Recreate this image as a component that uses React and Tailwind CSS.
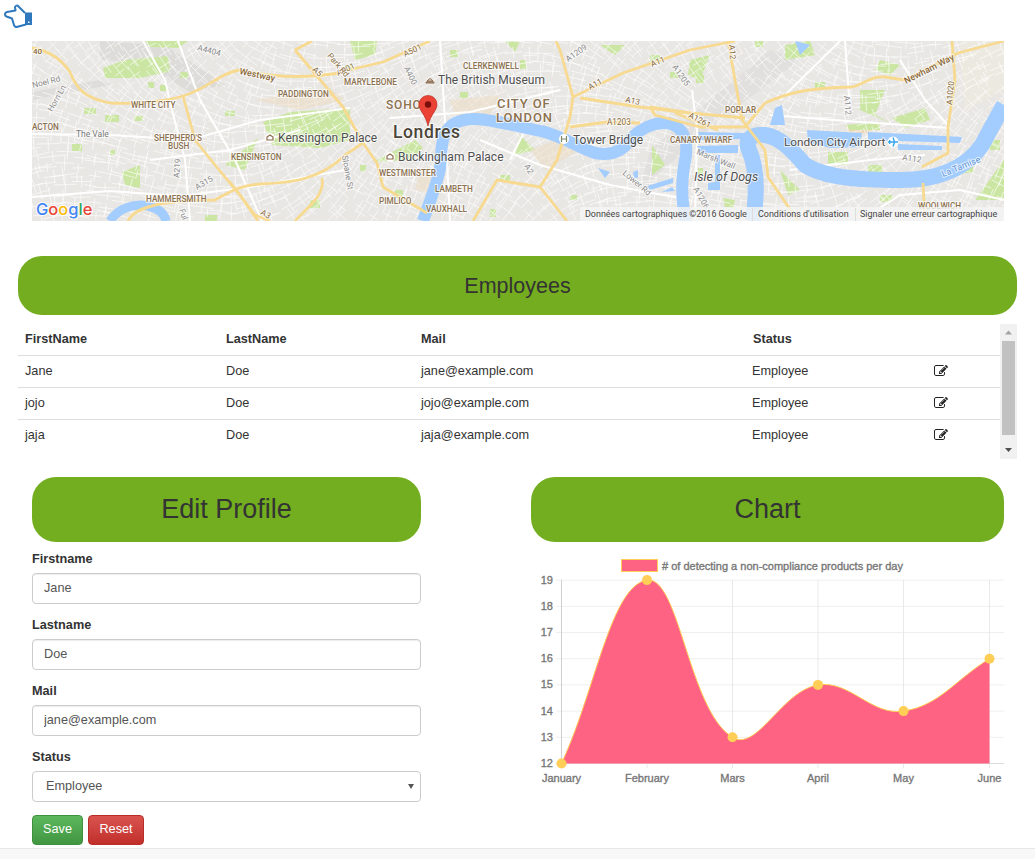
import React from "react";

const FONT = "'Liberation Sans', Arial, sans-serif";

function rng(seed) {
  let s = seed;
  return () => {
    s = (s * 16807) % 2147483647;
    return s / 2147483647;
  };
}

function buildStreets() {
  const r = rng(4242);
  const out = [];
  for (let y = 41; y < 221; y += 10) {
    for (let x = 32; x < 1004; x += 14) {
      const a = Math.sin(x / 90) * 0.7 + Math.cos(y / 60) * 0.5 + (r() - 0.5) * 0.2;
      const len = 6 + r() * 8;
      const cx = x + r() * 9;
      const cy = y + r() * 7;
      const dx = Math.cos(a) * len;
      const dy = Math.sin(a) * len;
      out.push(`M${(cx - dx).toFixed(1)} ${(cy - dy).toFixed(1)}L${(cx + dx).toFixed(1)} ${(cy + dy).toFixed(1)}`);
      const l2 = 4 + r() * 5;
      const ex = -Math.sin(a) * l2;
      const ey = Math.cos(a) * l2;
      out.push(`M${(cx - ex).toFixed(1)} ${(cy - ey).toFixed(1)}L${(cx + ex).toFixed(1)} ${(cy + ey).toFixed(1)}`);
    }
  }
  return out.join("");
}
const STREETS = buildStreets();

const WHITE_ROADS = [
  "M143 41L165 80L172 110L185 160L190 221",
  "M32 197L110 191L180 196L250 187L345 170",
  "M32 134L110 135L190 140L260 120L350 108",
  "M178 41L200 100L235 160L262 221",
  "M150 160L230 150L300 130",
  "M440 41L445 120L450 221",
  "M390 118L470 112L560 90",
  "M480 140L540 165L610 185L690 200",
  "M510 160L530 120",
  "M780 100L840 41",
  "M770 115L860 122L950 128",
  "M845 41L850 110",
  "M900 60L925 100L948 125",
  "M790 170L870 160L925 155",
  "M860 221L900 195L960 190L1004 200",
  "M692 90L697 130L695 221",
];

const YELLOW_ROADS = [
  "M32 48C50 51 62 60 70 72C76 88 84 98 110 103C140 105 170 100 183 96C205 90 222 72 240 70C265 76 300 80 345 72",
  "M183 96L195 140L215 165L240 195L258 221",
  "M128 221C135 206 165 200 215 200C230 192 238 186 260 184C290 183 320 180 345 155",
  "M230 182L255 215L270 221",
  "M295 221C310 205 325 195 322 178",
  "M340 72L383 62L430 41",
  "M295 50L343 107L363 143L377 163L383 187L427 213",
  "M295 50L312 41",
  "M345 155L363 143",
  "M473 221L497 180L540 187L567 221",
  "M540 187L557 160L570 117L573 97L560 50L556 41",
  "M573 97L623 73L690 50",
  "M580 98L640 107L690 113",
  "M570 127L607 122L640 123",
  "M728 41L735 80L742 120L765 150L768 177L798 221",
  "M765 103C790 92 808 88 852 87C865 84 870 76 885 77L905 80L958 53L1004 41",
  "M952 41L955 80L948 127L948 153L922 167",
  "M650 107L655 115L700 127L745 127L765 103",
  "M675 113L718 130",
  "M923 183L925 221",
  "M690 50L735 41",
  "M650 107L690 113L745 118",
];

const PARKS = [
  "M103 68L125 60L158 57L168 72L140 78L105 78Z",
  "M145 41L188 41L178 48L150 47Z",
  "M158 57L168 56L170 72L163 66Z",
  "M263 122L290 112L350 108L350 140L320 148L272 145Z",
  "M373 162L415 140L423 148L410 160Z",
  "M350 41L377 41L375 55L355 60Z",
  "M122 172L140 165L140 188L125 185Z",
  "M258 138L245 170L225 165Z",
  "M785 45L810 41L815 55L785 60Z",
  "M880 60L900 65L890 75L875 70Z",
  "M860 90L885 90L875 115L895 125L860 110Z",
  "M892 118L925 108L930 120L905 128Z",
  "M845 125L880 122L880 130L850 130Z",
  "M690 60L710 55L700 80L688 75Z",
  "M828 152L848 152L848 165L828 165Z",
  "M780 170L790 180L800 190L788 195Z",
  "M600 45L625 45L615 55Z",
  "M505 41L520 41L515 52Z",
  "M520 135L535 150L515 155Z",
  "M652 145L665 165L652 175Z",
  "M975 200L1004 160L1004 200Z",
  "M723 198L735 200L733 208L725 207Z",
];

const GREEN_DOTS = [
  [84, 108, 12, 6], [105, 115, 14, 7], [134, 116, 9, 5], [72, 144, 10, 7], [110, 150, 5, 5],
  [180, 72, 8, 6], [225, 111, 10, 5], [345, 65, 8, 6], [450, 50, 8, 7], [460, 92, 8, 6], [520, 60, 6, 9],
  [570, 195, 7, 5], [650, 55, 10, 8], [670, 72, 9, 6], [815, 82, 10, 7], [500, 175, 10, 7], [395, 190, 8, 8],
  [360, 165, 6, 6], [310, 200, 10, 8], [490, 209, 6, 8], [205, 215, 12, 6], [755, 40, 8, 7],
  [868, 165, 14, 10], [822, 170, 7, 10], [880, 195, 12, 7], [990, 140, 10, 10], [965, 165, 8, 8], [696, 75, 8, 8],
  [698, 168, 5, 8], [148, 82, 6, 6], [160, 85, 7, 6],
];

const DOCKS = [
  "M807 130L862 133L860 147L830 148L808 142Z",
  "M868 132L962 137L960 143L868 140Z",
  "M898 144L942 146L942 150L898 150Z",
  "M698 132L745 133L742 139L700 140Z",
  "M697 146L738 145L738 153L700 153Z",
  "M715 155L720 155L720 190L708 190L708 183L715 182Z",
  "M647 186L673 178L673 183L650 190Z",
  "M672 187L675 191L662 192Z",
  "M633 172L638 170L638 178L634 178Z",
  "M775 108L782 105L785 125L770 125Z",
  "M598 168L610 172L605 178Z",
  "M795 41L800 55L810 45Z",
];

function L({ x, y, s = 8.2, c = "#8c7150", r, w = 400, i, ls, ff = "Roboto", children, a = "start" }) {
  return (
    <text
      x={x}
      y={y}
      fontSize={s}
      fill={c}
      fontWeight={w}
      fontStyle={i ? "italic" : "normal"}
      letterSpacing={ls}
      fontFamily={`${ff}, 'Liberation Sans', sans-serif`}
      textAnchor={a}
      transform={r ? `rotate(${r} ${x} ${y})` : undefined}
      stroke="#ffffff"
      strokeOpacity="0.7"
      strokeWidth="2"
      paintOrder="stroke"
    >
      {children}
    </text>
  );
}

function MapDrawing() {
  return (
    <svg width="972" height="180" viewBox="32 41 972 180" className="block">
      <g style={{ filter: "blur(0.5px)" }}>
        <rect x="32" y="41" width="972" height="180" fill="#e9e7e4" />
        <path d="M100 41L165 45L225 85L190 92L140 62L100 60Z" fill="#dddcd9" />
        <path d="M32 92L100 80L110 85L32 100Z" fill="#dfdddb" />
        <path d="M640 190L720 120L800 60L770 50L650 150Z" fill="#e2e0de" />
        <path d="M960 41L1004 41L1004 90L965 110Z" fill="#ece9e0" />
        <path d="M845 125L880 124L870 133L850 134Z" fill="#ead9bd" />
        {PARKS.map((d, i) => (
          <path key={i} d={d} fill="#cbe6a3" />
        ))}
        {GREEN_DOTS.map(([x, y, w, h], i) => (
          <rect key={i} x={x} y={y} width={w} height={h} fill="#cbe6a3" />
        ))}
        <path d={STREETS} stroke="#ffffff" strokeWidth="0.9" fill="none" strokeOpacity="0.7" />
        <path d="M255 100L330 88L345 100L300 110Z M450 100L500 95L490 115L455 115Z M530 150L570 135L580 150L545 170Z M420 170L445 175L440 195L415 190Z" fill="#ecdcc4" opacity="0.55" />
        {WHITE_ROADS.map((d, i) => (
          <path key={i} d={d} stroke="#ffffff" strokeWidth="2" fill="none" />
        ))}
        <path
          d="M110 221C118 208 135 203 148 206C160 209 165 215 166 221"
          stroke="#a3ccff"
          strokeWidth="9"
          fill="none"
        />
        <path
          d="M423 221C430 200 437 185 440 168C442 150 440 135 452 125C462 118 478 118 492 121C510 124 525 128 545 132C565 138 580 148 595 153C610 156 622 152 630 140C640 128 655 122 667 123C680 125 688 135 686 155C682 175 680 195 686 221"
          stroke="#a3ccff"
          strokeWidth="12"
          fill="none"
        />
        <path
          d="M753 221C757 195 758 170 749 150C745 140 750 134 765 135C780 137 792 150 805 165C825 178 860 180 900 180C935 180 965 170 982 145C990 130 998 115 1004 105"
          stroke="#a3ccff"
          strokeWidth="16"
          fill="none"
        />
        {DOCKS.map((d, i) => (
          <path key={i} d={d} fill="#a3ccff" />
        ))}
        {YELLOW_ROADS.map((d, i) => (
          <path key={i} d={d} stroke="#f7da90" strokeWidth="2.8" fill="none" strokeLinejoin="round" />
        ))}
      </g>
      <L x="33" y="54" c="#8a6a3c" w={500} s="8">40</L>
      <L x="197" y="50" c="#8a8a8a" r="15">A4404</L>
      <L x="33" y="88" c="#8a8a8a" r="-14">Noel Rd</L>
      <L x="52" y="112" c="#8a8a8a" r="-60">Horn Ln</L>
      <L x="131" y="108" w={500}>WHITE CITY</L>
      <L x="76" y="137" c="#777" s="8.5">The Vale</L>
      <L x="154" y="141" w={500}>SHEPHERD'S</L>
      <L x="168" y="149" w={500}>BUSH</L>
      <L x="32" y="130" w={500}>ACTON</L>
      <L x="231" y="160" w={500}>KENSINGTON</L>
      <L x="146" y="202" w={500}>HAMMERSMITH</L>
      <L x="278" y="97" w={500}>PADDINGTON</L>
      <L x="239" y="74" r="12" c="#8a6a3c" s="9" w={500}>Westway</L>
      <L x="179" y="178" c="#8a8a8a" r="-85">A219</L>
      <L x="197" y="190" c="#8a8a8a" r="-30">A315</L>
      <L x="342" y="156" c="#8a8a8a" r="80">Sloane St</L>
      <L x="179" y="210" c="#8a8a8a" r="70">Ful</L>
      <L x="312" y="70" c="#8a6a3c" r="45">A5</L>
      <L x="338" y="76" c="#8a6a3c" r="-25">A501</L>
      <L x="405" y="57" c="#8a6a3c" r="-25">A501</L>
      <L x="327" y="56" c="#8a6a3c" r="50">Park Rd</L>
      <L x="404" y="68" c="#8a8a8a" r="65">A400</L>
      <L x="344" y="85" w={500}>MARYLEBONE</L>
      <L x="463" y="69" w={500}>CLERKENWELL</L>
      <L x="379" y="176" w={500}>WESTMINSTER</L>
      <L x="435" y="192" w={500}>LAMBETH</L>
      <L x="379" y="204" w={500}>PIMLICO</L>
      <L x="426" y="212" w={500}>VAUXHALL</L>
      <L x="386" y="109" s="12" ls="0.8" w={500}>SOHO</L>
      <L x="497" y="108" s="13" ls="0.9" w={500}>CITY OF</L>
      <L x="496" y="122" s="13" ls="0.9" w={500}>LONDON</L>
      <L x="393" y="138" s="17.5" c="#4a4538" w={500} ls="0.6">Londres</L>
      <L x="278" y="142" s="12" c="#4f4f4f">Kensington Palace</L>
      <L x="438" y="84" s="12" c="#4f4f4f">The British Museum</L>
      <L x="398" y="161" s="12" c="#4f4f4f">Buckingham Palace</L>
      <L x="573" y="144" s="12" c="#4f4f4f">Tower Bridge</L>
      <L x="784" y="146" s="11.800" c="#4f4f4f">London City Airport</L>
      <L x="694" y="181" s="12.500" c="#4f4f4f" i>Isle of Dogs</L>
      <L x="943" y="177" s="9" c="#5c93d9" r="-22">La Tamise</L>
      <L x="670" y="143" w={500}>CANARY WHARF</L>
      <L x="725" y="113" w={500}>POPLAR</L>
      <L x="918" y="209" w={500}>WOOLWICH</L>
      <L x="906" y="84" s="9" c="#8a6a3c" r="-27" w={500}>Newham Way</L>
      <L x="696" y="154" c="#8a8a8a" r="22">Marsh Wall</L>
      <L x="902" y="160" c="#8a8a8a" r="8">A112</L>
      <L x="844" y="96" c="#8a8a8a" r="85">A112</L>
      <L x="952" y="105" c="#8a6a3c" r="-85">A1020</L>
      <L x="729" y="45" c="#8a6a3c" r="85">A12</L>
      <L x="625" y="102" c="#8a6a3c" r="12">A13</L>
      <L x="590" y="90" c="#8a6a3c" r="-28">A11</L>
      <L x="652" y="67" c="#8a6a3c" r="-22">A11</L>
      <L x="607" y="125" c="#8a6a3c">A1203</L>
      <L x="688" y="117" c="#8a6a3c" r="28">A1261</L>
      <L x="568" y="62" c="#8a8a8a" r="-35">A1209</L>
      <L x="672" y="67" c="#8a8a8a" r="55">A1205</L>
      <L x="524" y="166" c="#8a8a8a" r="60">A2</L>
      <L x="622" y="174" c="#8a8a8a" r="40">Lower Rd</L>
      <L x="693" y="189" c="#8a8a8a" r="60">A1206</L>
      <L x="260" y="214" c="#8a6a3c" r="30">A3</L>

      {/* place markers */}
      <circle cx="270" cy="138" r="5" fill="#fff" />
      <path d="M267 140h6v-3l-3-2-3 2z" fill="none" stroke="#8a6a4a" strokeWidth="1.2" />
      <path d="M426 83h8v-1h-8zM427 81h6l-3-2.5zM428 81v2M430 81v2M432 81v2" fill="none" stroke="#8a6a4a" strokeWidth="1" />
      <circle cx="390" cy="157" r="5" fill="#fff" />
      <path d="M387 159h6v-3l-3-2-3 2z" fill="none" stroke="#8a6a4a" strokeWidth="1.2" />
      <circle cx="564" cy="139" r="5" fill="#fff" />
      <path d="M561.5 136v6M566.5 136v6M561.5 139h5" stroke="#7b8a6a" strokeWidth="1.2" fill="none" />
      <circle cx="893" cy="142" r="5.5" fill="#fff" />
      <path d="M888 142h10M893 137.5l1.6 4.5-1.6 4.5M889.5 140l.5 2-.5 2" stroke="#35a5ee" strokeWidth="1.4" fill="none" />

      {/* pin */}
      <path d="M428 95.5c-5 0-9 3.900-9 8.900 0 6.500 6.300 9.500 9 21.600 2.700-12.100 9-15.100 9-21.600 0-5-4-8.900-9-8.900z" fill="#ea4335" stroke="#b3261e" strokeWidth="0.6" />
      <circle cx="428" cy="104.500" r="3.200" fill="#7a0f0c" />

      {/* logo */}
      <text x="36" y="215" fontSize="16.500" fontFamily="Inter, 'Liberation Sans', sans-serif" fontWeight="500" stroke="#ffffff" strokeWidth="2" strokeOpacity="0.85" paintOrder="stroke">
        <tspan fill="#4285f4">G</tspan>
        <tspan fill="#ea4335">o</tspan>
        <tspan fill="#fbbc05">o</tspan>
        <tspan fill="#4285f4">g</tspan>
        <tspan fill="#34a853">l</tspan>
        <tspan fill="#ea4335">e</tspan>
      </text>

      {/* attribution */}
      <rect x="580" y="207" width="424" height="14" fill="#f5f5f5" fillOpacity="0.8" />
      <rect x="752" y="208" width="1" height="13" fill="#dddddd" />
      <rect x="855" y="208" width="1" height="13" fill="#dddddd" />
      <g fontFamily="Roboto, 'Liberation Sans', sans-serif" fontSize="8.950" fill="#444444">
        <text x="585" y="217">Données cartographiques ©2016 Google</text>
        <text x="758" y="217">Conditions d'utilisation</text>
        <text x="860" y="217">Signaler une erreur cartographique</text>
      </g>
    </svg>
  );
}

function HandIcon() {
  return (
    <svg width="30" height="24" viewBox="3 4 30 24" className="block">
      <path
        d="M25 13 L18.500 6.500 C17.500 5 15.500 5.500 15 7 L15.500 10.500 L7 12 C4.500 12.500 4.300 15.500 6.500 16.500 L12 18.500 L14 25 C14.500 26.800 16 27.300 17.500 26.800 L26 24.500"
        fill="#ffffff"
        stroke="#2f78bd"
        strokeWidth="2"
        strokeLinejoin="round"
      />
      <rect x="25" y="12.500" width="7" height="12.500" fill="#2f78bd" />
      <rect x="28" y="21.500" width="1.500" height="1.500" fill="#ffffff" />
    </svg>
  );
}

function EditIcon() {
  return (
    <svg width="14" height="14" viewBox="0 0 1792 1792" className="block -ml-px" fill="#222">
      <path d="M888 1184l116-116-152-152-116 116v56h96v96h56zm440-720q-16-16-33 1l-350 350q-17 17-1 33t33-1l350-350q17-17 1-33zm80 594v190q0 119-84.500 203.500t-203.500 84.500h-832q-119 0-203.500-84.500t-84.500-203.500v-832q0-119 84.500-203.500t203.500-84.500h832q63 0 117 25 15 7 18 23 3 17-9 29l-49 49q-14 14-32 8-23-6-45-6h-832q-66 0-113 47t-47 113v832q0 66 47 113t113 47h832q66 0 113-47t47-113v-126q0-13 9-22l64-64q15-15 35-7t20 29zm-96-738l288 288-672 672h-288v-288zm444 132l-92 92-288-288 92-92q28-28 68-28t68 28l152 152q28 28 28 68t-28 68z" />
    </svg>
  );
}

const LABELS = ["January", "February", "Mars", "April", "May", "June"];
const VALUES = [12, 19, 13, 15, 14, 16];
const XS = [561.5, 647, 732.5, 818, 903.5, 989.5];
const yOf = (v) => 763.5 - (v - 12) * 26.2;

function splinePath() {
  const pts = VALUES.map((v, i) => [XS[i], yOf(v)]);
  const t = 0.4;
  const ctrl = pts.map((p, i) => {
    const prev = pts[i - 1] || p;
    const next = pts[i + 1] || p;
    const d01 = Math.hypot(p[0] - prev[0], p[1] - prev[1]);
    const d12 = Math.hypot(next[0] - p[0], next[1] - p[1]);
    const sum = d01 + d12 || 1;
    const fa = (t * d01) / sum;
    const fb = (t * d12) / sum;
    return {
      a: [p[0] - fa * (next[0] - prev[0]), p[1] - fa * (next[1] - prev[1])],
      b: [p[0] + fb * (next[0] - prev[0]), p[1] + fb * (next[1] - prev[1])],
    };
  });
  let d = `M${pts[0][0]} ${pts[0][1]}`;
  for (let i = 1; i < pts.length; i++) {
    d += `C${ctrl[i - 1].b[0]} ${ctrl[i - 1].b[1]} ${ctrl[i].a[0]} ${ctrl[i].a[1]} ${pts[i][0]} ${pts[i][1]}`;
  }
  return d;
}

const AXIS_TEXT = { fontSize: 11, fill: "#777777", stroke: "#777777", strokeWidth: 0.35 };

function Chart() {
  const line = splinePath();
  const area = `${line}L989.5 763.5L561.5 763.5Z`;
  const pts = VALUES.map((v, i) => [XS[i], yOf(v)]);
  const ticks = [12, 13, 14, 15, 16, 17, 18, 19];
  return (
    <svg width="473" height="235" viewBox="531 555 473 235" className="block" fontFamily={FONT}>
      {ticks.map((t) => (
        <g key={t}>
          <line x1="556" x2="1004" y1={yOf(t)} y2={yOf(t)} stroke={t === 12 ? "#dcdcdc" : "#efefef"} strokeWidth="1" />
          <text x="553" y={yOf(t) + 3.500} textAnchor="end" {...AXIS_TEXT}>{t}</text>
        </g>
      ))}
      {XS.map((x, i) => (
        <g key={x}>
          <line x1={x} x2={x} y1="580" y2="768" stroke={i === 0 ? "#cfcfcf" : "#e9e9e9"} strokeWidth="1" />
          <text x={x} y="781.500" textAnchor="middle" {...AXIS_TEXT}>{LABELS[i]}</text>
        </g>
      ))}
      <path d={area} fill="#ff6384" />
      <path d={line} fill="none" stroke="#ffce56" strokeWidth="1" />
      {pts.map(([x, y]) => (
        <circle key={x} cx={x} cy={y} r="5" fill="#ffce56" />
      ))}
      <rect x="621.500" y="559.500" width="36" height="12" fill="#ff6384" stroke="#ffce56" strokeWidth="1" />
      <text x="662" y="569.500" {...AXIS_TEXT} fontSize="11">
        # of detecting a non-compliance products per day
      </text>
    </svg>
  );
}

const ROWS = [
  ["Jane", "Doe", "jane@example.com", "Employee"],
  ["jojo", "Doe", "jojo@example.com", "Employee"],
  ["jaja", "Doe", "jaja@example.com", "Employee"],
];

const COLS = "grid grid-cols-[201px_195px_331px_183px_1fr] items-center pl-[7px]";

function Field({ label, value }) {
  return (
    <div className="mb-[11px]">
      <div className="h-[19px] mb-[5px] leading-[21px] font-bold text-[#333]">{label}</div>
      <input
        readOnly
        value={value}
        className="block w-full h-[31px] rounded-[4px] border border-[#ccc] bg-white px-[11px] pb-[2px] text-[#555] outline-none shadow-[inset_0_1px_1px_rgba(0,0,0,0.075)]"
      />
    </div>
  );
}

function GreenHeading({ children, big }) {
  return (
    <div
      className={
        big
          ? "h-[65px] rounded-[24px] bg-[#72ae20] flex items-center justify-center text-[27px] text-[#333]"
          : "h-[59px] rounded-[24px] bg-[#74ae20] flex items-center justify-center pt-px text-[21.5px] text-[#333]"
      }
    >
      {children}
    </div>
  );
}

export default function App() {
  return (
    <div
      className="w-[1035px] h-[859px] overflow-hidden bg-white text-[12.7px] text-[#333] flex flex-col"
      style={{ fontFamily: FONT }}
    >
      <div className="h-[41px] pl-[3px] pt-[4px]">
        <HandIcon />
      </div>
      <div className="ml-[32px] w-[972px] h-[180px]">
        <MapDrawing />
      </div>

      <div className="mx-[18px] mt-[35px]">
        <GreenHeading>Employees</GreenHeading>
      </div>

      <div className="ml-[18px] w-[999px] h-[136px] mt-[8px] flex">
        <div className="w-[982px]">
          <div className={`${COLS} h-[33px] pt-px font-bold border-b border-[#ddd]`}>
            <span>FirstName</span>
            <span>LastName</span>
            <span>Mail</span>
            <span className="pl-px">Status</span>
            <span />
          </div>
          {ROWS.map((r, i) => (
            <div key={r[0]} className={`${COLS} h-[32px] ${i < 2 ? "border-b border-[#ddd]" : ""}`}>
              <span>{r[0]}</span>
              <span>{r[1]}</span>
              <span>{r[2]}</span>
              <span>{r[3]}</span>
              <span className="flex pb-[2px]">
                <EditIcon />
              </span>
            </div>
          ))}
        </div>
        <div className="w-[17px] mt-px bg-[#f1f1f1] flex flex-col items-center">
          <svg width="9" height="17" viewBox="0 0 9 17" className="block">
            <path d="M4.500 6.500L8 10.500H1z" fill="#a3a3a3" />
          </svg>
          <div className="w-[13px] h-[94px] bg-[#c1c1c1]" />
          <svg width="9" height="24" viewBox="0 0 9 24" className="block">
            <path d="M1 13h7l-3.500 4z" fill="#505050" />
          </svg>
        </div>
      </div>

      <div className="flex mt-[18px] ml-[32px] h-[371px]">
        <div className="w-[389px] flex flex-col">
          <GreenHeading big>Edit Profile</GreenHeading>
          <div className="mt-[7px]">
            <Field label="Firstname" value="Jane" />
            <Field label="Lastname" value="Doe" />
            <Field label="Mail" value="jane@example.com" />
            <div className="mb-[13px]">
              <div className="h-[19px] mb-[5px] leading-[21px] font-bold text-[#333]">Status</div>
              <div className="relative">
                <select
                  defaultValue="Employee"
                  className="block w-full h-[31px] appearance-none rounded-[4px] border border-[#ccc] bg-white pl-[13px] text-[#555] outline-none"
                >
                  <option>Employee</option>
                </select>
                <svg width="6" height="5" viewBox="0 0 6 5" className="absolute right-[7px] top-[13px]">
                  <path d="M0 0h6L3 5z" fill="#555" />
                </svg>
              </div>
            </div>
            <div className="flex gap-[5px]">
              <button className="w-[51px] h-[30px] rounded-[4px] border border-[#3e8f3e] bg-gradient-to-b from-[#5cb85c] to-[#419641] text-white">
                Save
              </button>
              <button className="w-[56px] h-[30px] rounded-[4px] border border-[#b92c28] bg-gradient-to-b from-[#d9534f] to-[#c12e2a] text-white">
                Reset
              </button>
            </div>
          </div>
        </div>
        <div className="ml-[110px] w-[473px] flex flex-col">
          <GreenHeading big>Chart</GreenHeading>
          <div className="mt-[13px]">
            <Chart />
          </div>
        </div>
      </div>

      <div className="flex-1 bg-[#f8f8f8] border-t border-[#e7e7e7]" />
    </div>
  );
}
